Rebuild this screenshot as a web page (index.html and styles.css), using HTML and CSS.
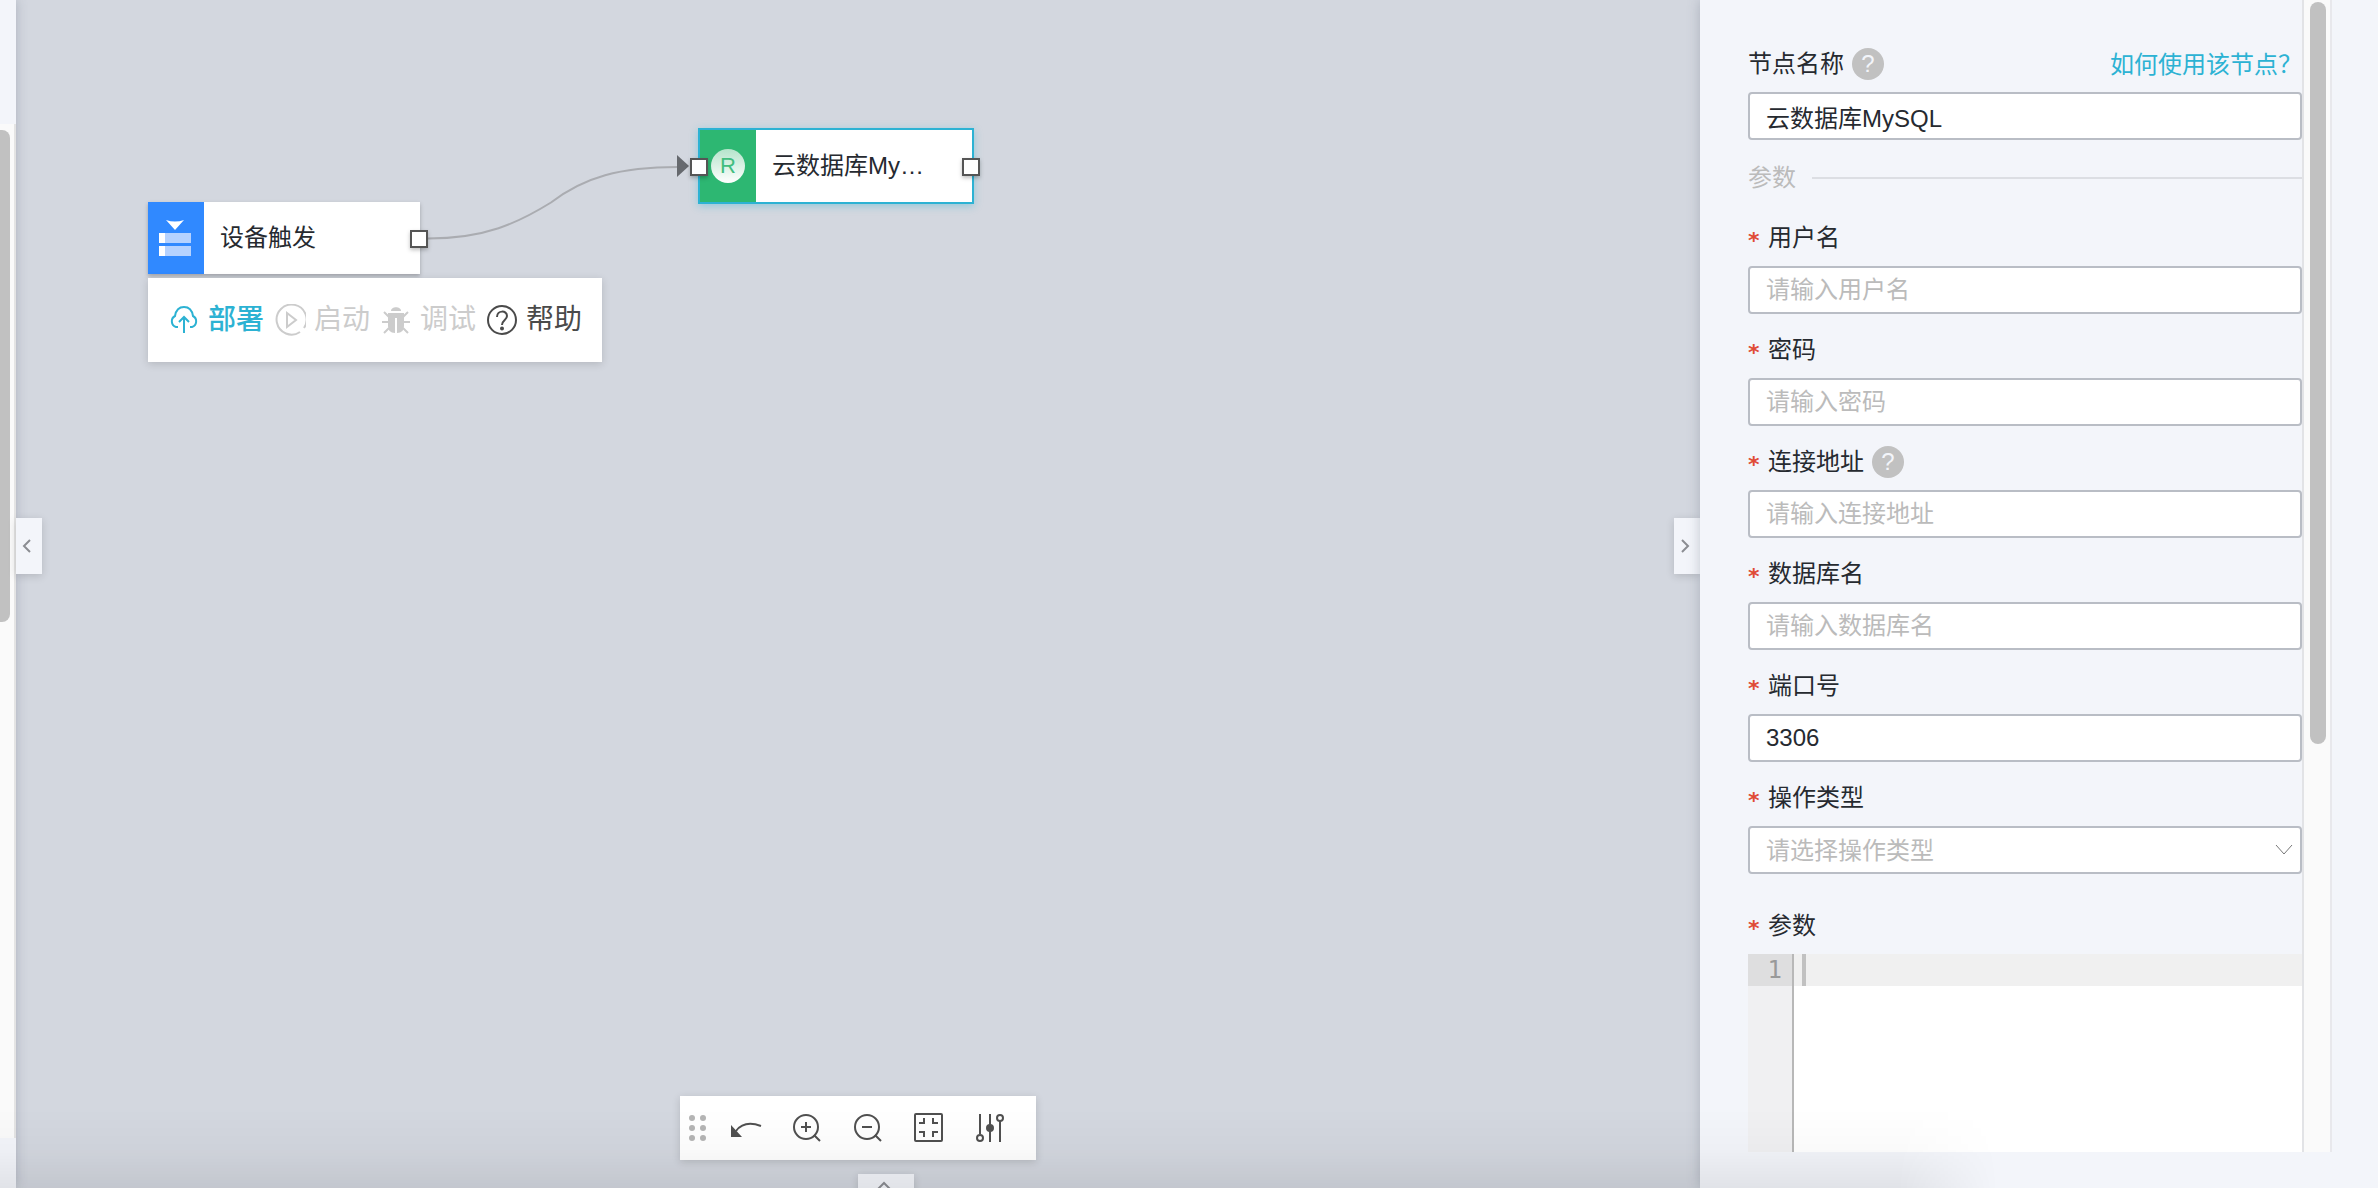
FILE: index.html
```html
<!DOCTYPE html>
<html lang="zh-CN">
<head>
    <meta charset="UTF-8">
    <title>云数据库MySQL</title>
    <link rel="stylesheet" href="styles.css">
</head>
<body>

<div class="page">
    <div class="sidebar">
        <div class="sidebar-track">
            <div class="sidebar-thumb"></div>
        </div>
    </div>

    <div class="canvas">
        <svg class="wires">
            <path class="wire" d="M428 238.500C485 238.500 518 223 551 202.500C584 177 620 167 678 167"/>
            <path class="arrow" d="M677 155L689 166L677 177Z"/>
        </svg>

        <div class="node node-trigger">
            <div class="node-icon blue">
                <svg class="device" width="56" height="72" viewBox="0 0 56 72">
                    <path d="M18 18Q27 21 36 18L27 28Z" fill="#fff"/>
                    <path d="M17 31H43V41H17ZM17 44H43V54H17Z" fill="#b5d2ff"/>
                    <path d="M11 31H17V41H11ZM11 44H17V54H11Z" fill="#fff"/>
                </svg>
            </div>
            <span class="node-name">设备触发</span>
            <span class="port port-out"></span>
        </div>

        <div class="node node-mysql">
            <div class="node-icon green"><span class="letter">R</span></div>
            <span class="node-name">云数据库My…</span>
            <span class="port port-in"></span>
            <span class="port port-out"></span>
        </div>

        <!-- 节点操作菜单 -->
        <div class="menu">
            <button class="menu-btn active" type="button">
                <svg width="32" height="32" viewBox="0 0 32 32">
                    <path d="M10 23H8A6 6 0 0 1 7 12C8 6 11 3 16 3S24 6 25 12A6 6 0 0 1 24 23H22M16 29V14M11 18L16 13L21 18"/>
                </svg>部署
            </button>
            <button class="menu-btn" type="button" disabled>
                <svg width="32" height="32" viewBox="0 0 32 32">
                    <path d="M30 24A15 15 0 1 0 26 28M13 9V23L22 16Z"/>
                </svg>启动
            </button>
            <button class="menu-btn" type="button" disabled>
                <svg width="32" height="32" viewBox="0 0 32 32">
                    <path d="M11 7C11 2 21 2 21 7Z" fill="currentColor" stroke="none"/>
                    <path d="M8 9H24V22Q24 29 17 29V14H15V29Q8 29 8 22Z" fill="currentColor" stroke="none"/>
                    <path d="M4 8L9 13M28 8L23 13M2 18H8M24 18H30M4 29L9 24M28 29L23 24"/>
                </svg>调试
            </button>
            <button class="menu-btn help" type="button">
                <svg width="32" height="32" viewBox="0 0 32 32">
                    <circle cx="16" cy="16" r="14"/>
                    <path d="M11 13C11 6 21 6 21 12C21 16 16 16 16 21"/>
                    <circle cx="16" cy="24.500" r="1" fill="currentColor"/>
                </svg>帮助
            </button>
        </div>

        <button class="fold fold-left" type="button" aria-label="收起左侧">
            <svg width="12" height="16" viewBox="0 0 12 16"><path d="M9 2L3 8L9 14"/></svg>
        </button>
        <button class="fold fold-right" type="button" aria-label="收起右侧">
            <svg width="12" height="16" viewBox="0 0 12 16"><path d="M3 2L9 8L3 14"/></svg>
        </button>
        <button class="fold fold-bottom" type="button" aria-label="展开日志">
            <svg width="16" height="12" viewBox="0 0 16 12"><path d="M2 9L8 3L14 9"/></svg>
        </button>

        <div class="tools">
            <svg class="drag" width="18" height="28" viewBox="0 0 18 28">
                <circle cx="3" cy="4" r="3"/><circle cx="14" cy="4" r="3"/>
                <circle cx="3" cy="14" r="3"/><circle cx="14" cy="14" r="3"/>
                <circle cx="3" cy="24" r="3"/><circle cx="14" cy="24" r="3"/>
            </svg>
            <button class="tool" type="button" aria-label="撤销">
                <svg width="32" height="32" viewBox="0 0 32 32">
                    <path d="M6 19C12 11 20 10 31 14"/>
                    <path d="M1 13V25H12Z" fill="currentColor" stroke="none"/>
                </svg>
            </button>
            <button class="tool" type="button" aria-label="放大">
                <svg width="32" height="32" viewBox="0 0 32 32">
                    <circle cx="15" cy="15" r="12"/>
                    <path d="M23 23L29 29M10 15H20M15 10V20"/>
                </svg>
            </button>
            <button class="tool" type="button" aria-label="缩小">
                <svg width="32" height="32" viewBox="0 0 32 32">
                    <circle cx="15" cy="15" r="12"/>
                    <path d="M23 23L29 29M10 15H20"/>
                </svg>
            </button>
            <button class="tool" type="button" aria-label="适应画布">
                <svg width="32" height="32" viewBox="0 0 32 32">
                    <rect x="2" y="2" width="27" height="27" rx="1"/>
                    <path d="M6 11H11V6M20 6V11H25M6 20H11V25M20 25V20H25"/>
                </svg>
            </button>
            <button class="tool" type="button" aria-label="设置">
                <svg width="32" height="32" viewBox="0 0 32 32">
                    <path d="M6 2V22M16 2V30M26 9V30"/>
                    <circle cx="6" cy="26" r="3"/>
                    <circle cx="16" cy="16" r="3" fill="currentColor"/>
                    <circle cx="26" cy="6" r="3"/>
                </svg>
            </button>
        </div>
    </div>

    <div class="panel">
        <form class="form">
            <div class="field">
                <div class="label-row">
                    <label for="name">节点名称</label>
                    <span class="tip">?</span>
                    <a class="doc" href="#">如何使用该节点<span class="mark">？</span></a>
                </div>
                <input class="control" id="name" type="text" value="云数据库MySQL">
            </div>
            <div class="divider">参数</div>
            <div class="field">
                <div class="label-row"><span class="star">*</span><label for="user">用户名</label></div>
                <input class="control" id="user" type="text" placeholder="请输入用户名">
            </div>
            <div class="field">
                <div class="label-row"><span class="star">*</span><label for="pwd">密码</label></div>
                <input class="control" id="pwd" type="password" placeholder="请输入密码">
            </div>
            <div class="field">
                <div class="label-row"><span class="star">*</span><label for="host">连接地址</label><span class="tip">?</span></div>
                <input class="control" id="host" type="text" placeholder="请输入连接地址">
            </div>
            <div class="field">
                <div class="label-row"><span class="star">*</span><label for="db">数据库名</label></div>
                <input class="control" id="db" type="text" placeholder="请输入数据库名">
            </div>
            <div class="field">
                <div class="label-row"><span class="star">*</span><label for="port">端口号</label></div>
                <input class="control" id="port" type="text" value="3306">
            </div>
            <div class="field">
                <div class="label-row"><span class="star">*</span><label for="type">操作类型</label></div>
                <div class="select">
                    <select class="control" id="type">
                        <option>请选择操作类型</option>
                    </select>
                    <svg width="20" height="12" viewBox="0 0 20 12"><path d="M2 1L10 10L18 1"/></svg>
                </div>
            </div>
            <div class="field field-code">
                <div class="label-row"><span class="star">*</span><label for="code">参数</label></div>
                <div class="editor">
                    <div class="gutter"><div class="line-no">1</div></div>
                    <div class="code">
                        <textarea id="code"></textarea>
                        <span class="cursor"></span>
                    </div>
                </div>
            </div>
        </form>
        <div class="track">
            <div class="thumb"></div>
        </div>
    </div>
</div>
<div class="shade"></div>

</body>
</html>
```
FILE: styles.css
```css
*{
    margin: 0;
    padding: 0;
    box-sizing: border-box;
}
body,input,select,button,textarea{
    font-family: "Liberation Sans", "Noto Sans CJK SC", sans-serif;
    font-size: 24px;
    color: #262a30;
}
body{
    overflow: hidden;
}
button{
    border: 0;
    background: none;
    cursor: pointer;
}
svg{
    display: block;
    fill: none;
    stroke: currentColor;
    stroke-width: 2;
}
.page{
    display: flex;
    min-height: 100vh;
    background-color: #f3f5fa;
}

/* 左侧滚动条 */
.sidebar{
    display: flex;
    width: 16px;
    padding: 124px 0 50px;
    background-color: #f3f5fa;
    box-shadow: 0 0 12px rgba(80,90,110,.3);
    z-index: 1;
}
.sidebar-track{
    flex: 1;
    padding-top: 6px;
    background-color: #fafafa;
    border-right: 2px solid #e4e4e4;
}
.sidebar-thumb{
    width: 10px;
    height: 492px;
    background-color: #c1c1c1;
    border-radius: 0 8px 8px 0;
}

/* 画布 */
.canvas{
    flex: 1;
    position: relative;
    background-color: #d3d7df;
}
.wires{
    position: absolute;
    left: -16px;
    top: 0;
    width: 720px;
    height: 280px;
}
.wire{
    stroke: #aaacb1;
}
.arrow{
    fill: #66696e;
    stroke: none;
}
.node{
    position: absolute;
    display: flex;
    align-items: center;
    background-color: #fff;
    box-shadow: 0 2px 4px rgba(0,0,0,.25);
}
.node-trigger{
    left: 132px;
    top: 202px;
    width: 272px;
    height: 72px;
}
.node-mysql{
    left: 682px;
    top: 128px;
    width: 276px;
    height: 76px;
    border: 2px solid #2cb2d3;
    box-shadow: 0 2px 8px rgba(44,178,211,.4);
}
.node-icon{
    display: flex;
    align-items: center;
    justify-content: center;
    width: 56px;
    height: 72px;
}
.device{
    stroke: none;
}
.blue{
    background-color: #3089ff;
}
.green{
    background-color: #2db772;
}
.letter{
    width: 34px;
    height: 34px;
    line-height: 34px;
    border-radius: 50%;
    background-image: linear-gradient(#b5e4cb, #fff);
    color: #42bd7f;
    font-size: 22px;
    text-align: center;
}
.node-name{
    padding-left: 16px;
    line-height: 32px;
}
.port{
    position: absolute;
    top: 50%;
    width: 18px;
    height: 18px;
    margin-top: -8px;
    background-color: #fff;
    border: 2px solid #555;
    box-shadow: 0 2px 4px rgba(0,0,0,.25);
}
.port-in{
    left: -10px;
}
.port-out{
    right: -8px;
}
.menu{
    position: absolute;
    left: 132px;
    top: 278px;
    display: flex;
    align-items: center;
    gap: 10px;
    height: 84px;
    padding: 0 20px;
    background-color: #fff;
    box-shadow: 0 2px 8px rgba(0,0,0,.15);
}
.menu-btn{
    display: flex;
    align-items: center;
    gap: 8px;
    font-size: 28px;
    line-height: 32px;
    color: #ccc;
}
.active{
    color: #2cb2d3;
    font-weight: 500;
}
.help{
    color: #4a4a4a;
}

/* 收起按钮 */
.fold{
    position: absolute;
    display: flex;
    align-items: center;
    justify-content: center;
    background-color: #f3f5fa;
    color: #8b8d92;
    box-shadow: 0 2px 8px rgba(0,0,0,.15);
}
.fold-left,.fold-right{
    top: 518px;
    width: 26px;
    height: 56px;
    padding-right: 4px;
}
.fold-left{
    left: 0;
    z-index: 2;
}
.fold-right{
    right: 0;
}
.fold-bottom{
    left: 842px;
    bottom: -12px;
    width: 56px;
    height: 26px;
    padding: 0 4px 2px 0;
}
.tools{
    position: absolute;
    left: 664px;
    bottom: 28px;
    display: flex;
    align-items: center;
    gap: 29px;
    height: 64px;
    padding: 0 30px 0 9px;
    background-color: #fff;
    box-shadow: 0 2px 8px rgba(0,0,0,.15);
}
.drag{
    margin-right: -6px;
    fill: #b5b5b5;
    stroke: none;
}
.tool{
    color: #505050;
}

/* 右侧属性面板 */
.panel{
    flex: 0 0 678px;
    display: flex;
    min-height: 100vh;
    padding: 0 46px 36px 48px;
    background-color: #f3f5fa;
    box-shadow: 0 0 12px rgba(80,90,110,.3);
    z-index: 1;
}
.form{
    flex: 1;
    display: flex;
    flex-direction: column;
    padding-top: 28px;
}
.label-row{
    display: flex;
    align-items: center;
    height: 64px;
    padding: 20px 0 12px;
    line-height: 32px;
}
.star{
    width: 20px;
    padding-top: 6px;
    color: #e04b36;
    font-family: "DejaVu Sans", sans-serif;
    font-weight: bold;
    font-size: 22px;
}
.tip{
    width: 32px;
    height: 32px;
    margin-left: 8px;
    border-radius: 50%;
    background-color: #c1c1c1;
    color: #f3f5fa;
    text-align: center;
}
.doc{
    margin-left: auto;
    color: #2cb2d3;
    text-decoration: none;
}
.mark{
    font-family: "Noto Sans CJK TC", sans-serif;
}
.control{
    display: block;
    width: 100%;
    height: 48px;
    padding: 0 16px;
    background-color: #fff;
    border: 2px solid #b9bdc5;
    border-radius: 4px;
    outline: none;
}
.control::placeholder{
    color: #bbb;
}
.divider{
    display: flex;
    align-items: center;
    gap: 16px;
    padding: 22px 0 8px;
    line-height: 32px;
    color: #bbb;
}
.divider::after{
    content: "";
    flex: 1;
    height: 2px;
    background-color: #dcdee3;
}
.select{
    position: relative;
}
.select select{
    appearance: none;
    color: #bbb;
}
.select svg{
    position: absolute;
    right: 8px;
    top: 18px;
    color: #777;
    stroke-width: 1;
    pointer-events: none;
}
.field-code{
    flex: 1;
    display: flex;
    flex-direction: column;
    padding-top: 16px;
}
.editor{
    flex: 1;
    display: flex;
    background-color: #fff;
}
.gutter{
    width: 46px;
    background-color: #f0f0f2;
    border-right: 2px solid #b8b8b8;
}
.line-no{
    padding-right: 10px;
    background-color: #dededf;
    color: #999;
    font-family: "DejaVu Sans Mono", monospace;
    line-height: 32px;
    text-align: right;
}
.code{
    flex: 1;
    position: relative;
    display: flex;
    background-image: linear-gradient(#f0f0f0, #f0f0f0);
    background-size: 100% 32px;
    background-repeat: no-repeat;
}
.code textarea{
    flex: 1;
    padding: 0 8px;
    border: 0;
    outline: none;
    background: none;
    line-height: 32px;
    resize: none;
}
.cursor{
    position: absolute;
    left: 8px;
    top: 0;
    width: 4px;
    height: 32px;
    background-color: #c1c1c1;
}
.track{
    width: 30px;
    padding: 2px 4px 0 6px;
    background-color: #fafafa;
    border-left: 2px solid #e2e3e6;
    border-right: 2px solid #e8e8ec;
}
.thumb{
    width: 16px;
    height: 742px;
    border-radius: 8px;
    background-color: #c1c1c1;
}

/* 底部阴影 */
.shade{
    position: fixed;
    left: 0;
    bottom: 0;
    width: 84%;
    height: 80px;
    background-image: linear-gradient(transparent, rgba(0,0,0,.02) 50%, rgba(0,0,0,.07));
    -webkit-mask-image: linear-gradient(90deg, #000 95%, transparent);
    mask-image: linear-gradient(90deg, #000 95%, transparent);
    pointer-events: none;
    z-index: 3;
}
```
